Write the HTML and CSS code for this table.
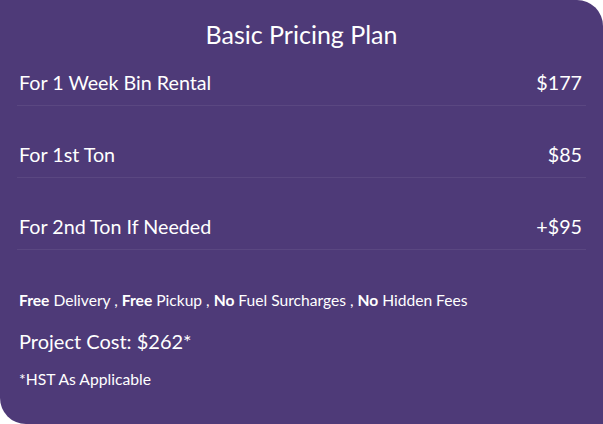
FILE: index.html
```html
<!DOCTYPE html>
<html>
<head>
<meta charset="utf-8">
<link rel="stylesheet" href="styles.css">
</head>
<body>
<div class="card">
  <h2 class="title">Basic Pricing Plan</h2>
  <div class="row"><span>For 1 Week Bin Rental</span><span>$177</span></div>
  <div class="row"><span>For 1st Ton</span><span>$85</span></div>
  <div class="row"><span>For 2nd Ton If Needed</span><span>+$95</span></div>
  <p class="features"><b>Free</b> Delivery , <b>Free</b> Pickup , <b>No</b> Fuel Surcharges , <b>No</b> Hidden Fees</p>
  <p class="total">Project Cost: $262*</p>
  <p class="note">*HST As Applicable</p>
</div>
</body>
</html>
```
FILE: styles.css
```css
html, body {
  margin: 0;
  padding: 0;
  background: #ffffff;
}
.card {
  width: 603px;
  height: 424px;
  box-sizing: border-box;
  background: #4e3a78;
  color: #ffffff;
  font-family: Lato, "Open Sans", sans-serif;
  border-radius: 0 26px 0 26px;
  padding: 20px 19px 0 19px;
}
.title {
  margin: 0 0 21px;
  font-size: 25px;
  font-weight: 400;
  line-height: 29px;
  text-align: center;
}
.row {
  display: flex;
  justify-content: space-between;
  font-size: 19.7px;
  line-height: 26px;
  padding: 0 2px 9px 2px;
  margin: 0 -2px 36px -2px;
  border-bottom: 1px solid rgba(255, 255, 255, 0.07);
}
.row span:last-child {
  margin-right: 2px;
}
.features {
  margin: 0 0 19px;
  padding-top: 4px;
  font-size: 15.6px;
  line-height: 20px;
}
.features b {
  font-weight: 700;
}
.total {
  margin: 0 0 16px;
  font-size: 20px;
  line-height: 24px;
}
.note {
  margin: 0;
  font-size: 15.7px;
  line-height: 20px;
}
```
